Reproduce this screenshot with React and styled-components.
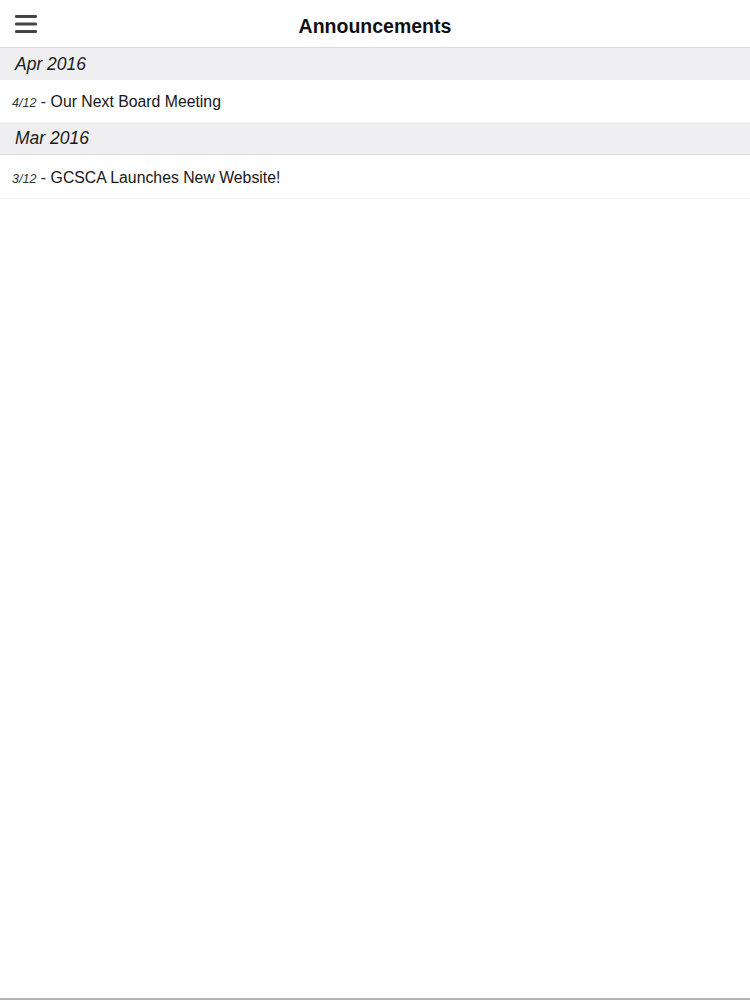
import React from "react";
import styled, { createGlobalStyle } from "styled-components";

const announcements = [
  {
    month: "Apr 2016",
    items: [{ date: "4/12", title: "Our Next Board Meeting" }],
  },
  {
    month: "Mar 2016",
    items: [{ date: "3/12", title: "GCSCA Launches New Website!" }],
    bordered: true,
  },
];

const MenuIcon = () => (
  <svg width="22" height="19" viewBox="0 0 22 19">
    <rect x="0" y="0" width="22" height="3" rx="1.2" fill="#444" />
    <rect x="0" y="7.5" width="22" height="3" rx="1.2" fill="#444" />
    <rect x="0" y="15" width="22" height="3" rx="1.2" fill="#444" />
  </svg>
);

const App = () => {
  return (
    <>
      <GlobalStyle />
      <Page>
        <Header>
          <MenuButton>
            <MenuIcon />
          </MenuButton>
          <Title>Announcements</Title>
        </Header>
        <List>
          {announcements.map((group) => (
            <React.Fragment key={group.month}>
              <Section $bordered={group.bordered}>{group.month}</Section>
              {group.items.map((item) => (
                <Row key={item.title}>
                  <DateLabel>{item.date}</DateLabel>
                  <Dash>-</Dash>
                  <RowTitle>{item.title}</RowTitle>
                </Row>
              ))}
            </React.Fragment>
          ))}
        </List>
        <Footer />
      </Page>
    </>
  );
};

const GlobalStyle = createGlobalStyle`
  body {
    margin: 0;
    background: #fff;
    font-family: "Liberation Sans", Arial, sans-serif;
  }
`;

const Page = styled.div`
  height: 1000px;
  display: flex;
  flex-direction: column;
  background: #fff;
  color: #111;
`;

const Header = styled.div`
  height: 47px;
  border-bottom: 1px solid #d9d9db;
  display: flex;
  align-items: center;
  justify-content: center;
  position: relative;
`;

const MenuButton = styled.div`
  position: absolute;
  left: 15px;
  top: 15px;
  width: 22px;
  height: 19px;
  display: flex;
`;

const Title = styled.div`
  font-size: 19.5px;
  font-weight: 700;
  color: #111;
  margin-top: 6px;
`;

const List = styled.div`
  display: flex;
  flex-direction: column;
  flex: 1;
`;

const Section = styled.div`
  height: ${(p) => (p.$bordered ? "31px" : "32px")};
  border-bottom: ${(p) => (p.$bordered ? "1px solid #dcdcde" : "none")};
  background: #efeef0;
  padding-left: 15px;
  display: flex;
  align-items: center;
  font-size: 17.5px;
  font-style: italic;
  color: #1c1c1c;
`;

const Row = styled.div`
  height: 43px;
  border-bottom: 1px solid #f3f3f3;
  padding: 2px 0 0 12px;
  box-sizing: border-box;
  display: flex;
  align-items: center;
  gap: 4.5px;

  &:last-child {
    height: 44px;
    padding-top: 3px;
  }
`;

const DateLabel = styled.span`
  font-size: 12.5px;
  font-style: italic;
  color: #333;
  margin-top: 2px;
`;

const Dash = styled.span`
  font-size: 15.8px;
  color: #222;
`;

const RowTitle = styled.span`
  font-size: 15.8px;
  color: #161616;
`;

const Footer = styled.div`
  height: 0;
  border-bottom: 2px solid #b4b4b4;
`;

export default App;
